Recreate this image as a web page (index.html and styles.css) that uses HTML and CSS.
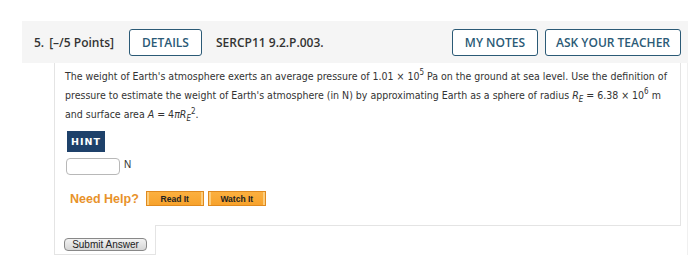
FILE: index.html
```html
<!DOCTYPE html>
<html>
<head>
<meta charset="utf-8">
<link rel="stylesheet" href="styles.css">
</head>
<body>
<div class="question">
  <div class="qhead">
    <span class="qnum">5.</span>
    <span class="qpts">[–/5 Points]</span>
    <button class="hbtn details">DETAILS</button>
    <span class="qcode">SERCP11 9.2.P.003.</span>
    <span class="spacer"></span>
    <button class="hbtn">MY NOTES</button>
    <button class="hbtn">ASK YOUR TEACHER</button>
  </div>
  <div class="qbody">
    <div class="content">
      <p class="prob">The weight of Earth's atmosphere exerts an average pressure of 1.01 × 10<sup>5</sup> Pa on the ground at sea level. Use the definition of pressure to estimate the weight of Earth's atmosphere (in N) by approximating Earth as a sphere of radius <i>R</i><sub><i>E</i></sub> = 6.38 × 10<sup>6</sup> m and surface area <i>A</i> = 4<i>πR</i><sub><i>E</i></sub><sup class="sq">2</sup>.</p>
      <button class="hint">HINT</button>
      <div class="answer"><span class="field"></span><span class="unit">N</span></div>
      <div class="help">
        <span class="needhelp">Need Help?</span>
        <button class="obtn">Read It</button>
        <button class="obtn">Watch It</button>
      </div>
    </div>
    <div class="submitbox"><button class="submit">Submit Answer</button></div>
  </div>
</div>
</body>
</html>
```
FILE: styles.css
```css
html, body { margin: 0; padding: 0; background: #fff; }
body { padding: 21px 0 0 22px; }
.question { width: 666px; }
.qhead {
  height: 42px;
  background: #f5f5f5;
  display: flex;
  align-items: center;
  padding: 0 7px 0 12px;
  font-family: "Open Sans", sans-serif;
  font-weight: 600;
  font-size: 12px;
  color: #333;
  box-sizing: border-box;
}
.qnum { margin-right: 5px; }
.qpts { margin-right: 15px; }
.hbtn {
  font-family: "Open Sans", sans-serif;
  font-weight: 600;
  font-size: 12px;
  color: #2b5a76;
  background: #fff;
  border: 1px solid #2b5a76;
  border-radius: 3px;
  height: 27px;
  padding: 0 12px;
  margin: 0;
}
.hbtn + .hbtn { margin-left: 7px; padding: 0 10px; }
.details { margin-right: 14px; }
.spacer { flex: 1; }
.qbody {
  padding-left: 32px;
  border-right: 1px solid #f0f0f0;
}
.content {
  width: 627px;
  height: 163px;
  box-sizing: border-box;
  border: 1px solid #e4e4e4;
  border-top: none;
  padding: 4px 10px 0 10px;
  font-family: "DejaVu Sans Condensed", "DejaVu Sans", Verdana, sans-serif;
  font-stretch: semi-condensed;
  font-size: 10.5px;
  letter-spacing: 0;
  color: #333;
}
.prob { margin: 0; line-height: 19px; }
.prob sup { font-size: 8px; vertical-align: 5px; line-height: 0; }
.prob sub { font-size: 8px; vertical-align: -3px; line-height: 0; }
.prob sup.sq { margin-left: 0; vertical-align: 4px; }
.hint {
  display: block;
  margin: 7px 0 0 2px;
  background: #1e416a;
  color: #fff;
  border: none;
  height: 21px;
  width: 38px;
  padding: 0;
  font-family: "DejaVu Sans", Verdana, sans-serif;
  font-weight: bold;
  font-size: 9.5px;
  letter-spacing: 1px;
}
.answer { display: flex; align-items: center; margin-top: 6px; margin-left: 1px; }
.field {
  width: 52px;
  height: 15px;
  border: 1px solid #b8b8b8;
  border-radius: 4px;
  background: #fff;
}
.unit { font-family: "Liberation Sans", Arial, sans-serif; font-size: 10px; margin-left: 4px; margin-top: -4px; }
.help { display: flex; align-items: center; margin-top: 16px; margin-left: 5px; }
.needhelp {
  font-family: "Liberation Sans", Arial, sans-serif;
  font-weight: bold;
  font-size: 12.5px;
  color: #e8922a;
  margin-right: 7px;
}
.obtn {
  width: 58px;
  height: 15px;
  padding: 0;
  margin: 0 4px 0 0;
  background: linear-gradient(#fbb040, #f7a22c);
  border: 1px solid #e08a1e;
  box-shadow: inset 2px 0 0 #fccd7c, inset -2px 0 0 #fccd7c;
  font-family: "Liberation Sans", Arial, sans-serif;
  font-weight: bold;
  font-size: 8.5px;
  color: #222;
}
.submitbox {
  width: 102px;
  height: 30px;
  box-sizing: border-box;
  border: 1px solid #e4e4e4;
  border-top: none;
  margin-top: -1px;
  background: #fff;
  position: relative;
  padding: 9px 0 0 9px;
}
.submit {
  width: 83px;
  height: 13px;
  padding: 0;
  border: 1px solid #888;
  border-radius: 4px;
  background: linear-gradient(#f2f2f2, #d6d6d6);
  font-family: "Liberation Sans", Arial, sans-serif;
  font-size: 10px;
  color: #222;
  line-height: 11px;
}
```
